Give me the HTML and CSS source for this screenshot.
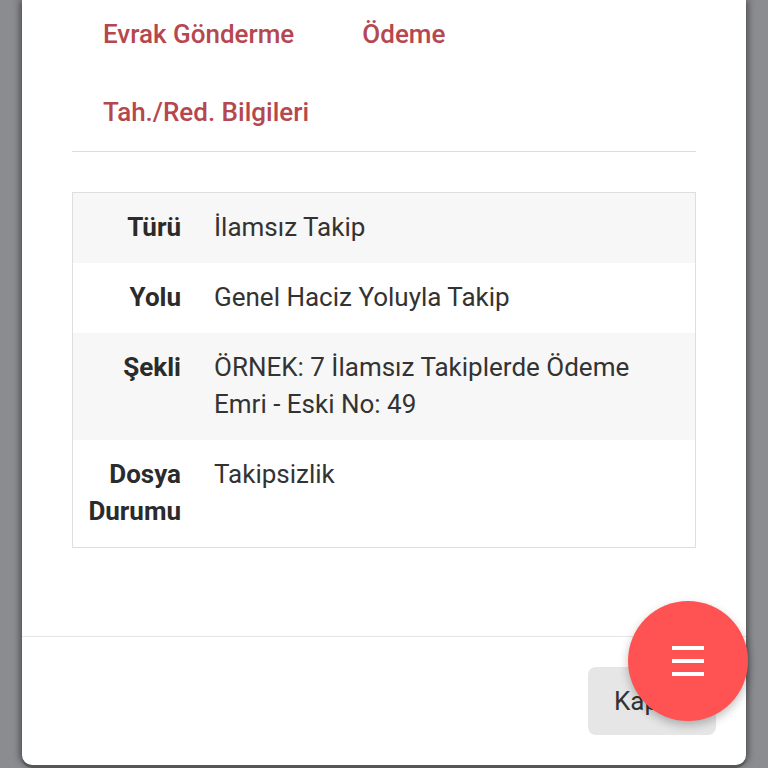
FILE: index.html
```html
<!DOCTYPE html>
<html lang="tr">
<head>
<meta charset="utf-8">
<link rel="stylesheet" href="styles.css">
</head>
<body>
<div class="modal">
  <div class="modal-body">
    <nav class="tabs">
      <a class="tab">Evrak Gönderme</a>
      <a class="tab">Ödeme</a>
      <a class="tab">Tah./Red. Bilgileri</a>
    </nav>
    <div class="info">
      <div class="row striped"><div class="label">Türü</div><div class="value">İlamsız Takip</div></div>
      <div class="row"><div class="label">Yolu</div><div class="value">Genel Haciz Yoluyla Takip</div></div>
      <div class="row striped"><div class="label">Şekli</div><div class="value">ÖRNEK: 7 İlamsız Takiplerde Ödeme Emri - Eski No: 49</div></div>
      <div class="row"><div class="label">Dosya Durumu</div><div class="value">Takipsizlik</div></div>
    </div>
  </div>
  <div class="modal-footer">
    <button class="btn">Kapat</button>
  </div>
</div>
<button class="fab" aria-label="Menü">
  <span class="bar"></span><span class="bar"></span><span class="bar"></span>
</button>
</body>
</html>
```

FILE: styles.css
```css
* { box-sizing: border-box; }
html, body { margin: 0; padding: 0; }
body {
  background: #8b8c90;
  font-family: Roboto, "Liberation Sans", sans-serif;
  color: #333;
  height: 768px;
  overflow: hidden;
  padding-left: 22px;
}
.modal {
  width: 724px;
  height: 765px;
  background: #fff;
  border-radius: 0 0 10px 10px;
  box-shadow: 0 3px 0 #56575a, -3px 0 6px rgba(0,0,0,0.35), 3px 0 6px rgba(0,0,0,0.35);
  display: flex;
  flex-direction: column;
}
.modal-body {
  padding: 0 50px;
  flex: 1;
}
.tabs {
  display: flex;
  flex-wrap: wrap;
  margin-top: -5px;
  border-bottom: 1px solid #dcdcdc;
  column-gap: 6px;
}
.tab {
  display: block;
  padding: 25px 31px;
  line-height: 28px;
  font-size: 26px;
  font-weight: 500;
  color: #b6474f;
}
.info {
  margin-top: 40px;
  border: 1px solid #dedede;
}
.row {
  display: grid;
  grid-template-columns: 125px 1fr;
  font-size: 26px;
  line-height: 37px;
}
.row.striped { background: #f7f7f7; }
.label {
  padding: 16px 17px 17px 4px;
  text-align: right;
  font-weight: 700;
  color: #2b2b2b;
}
.value {
  padding: 16px 16px 17px;
  color: #333;
}
.modal-footer {
  border-top: 1px solid #e6e6e6;
  display: flex;
  justify-content: flex-end;
  padding: 30px 30px 30px;
}
.btn {
  width: 128px;
  height: 68px;
  border: none;
  border-radius: 8px;
  background: #e6e6e6;
  font-family: Roboto, "Liberation Sans", sans-serif;
  font-size: 26px;
  color: #333;
  padding: 0 0 0 26px;
  text-align: left;
}
.fab {
  position: absolute;
  left: 628px;
  top: 601px;
  width: 120px;
  height: 120px;
  border-radius: 50%;
  border: none;
  background: #ff5353;
  box-shadow: 0 4px 10px rgba(0,0,0,0.25);
  display: flex;
  flex-direction: column;
  align-items: center;
  justify-content: center;
  gap: 9px;
  padding: 0;
}
.bar {
  display: block;
  width: 32px;
  height: 4px;
  background: #fff;
}
```
